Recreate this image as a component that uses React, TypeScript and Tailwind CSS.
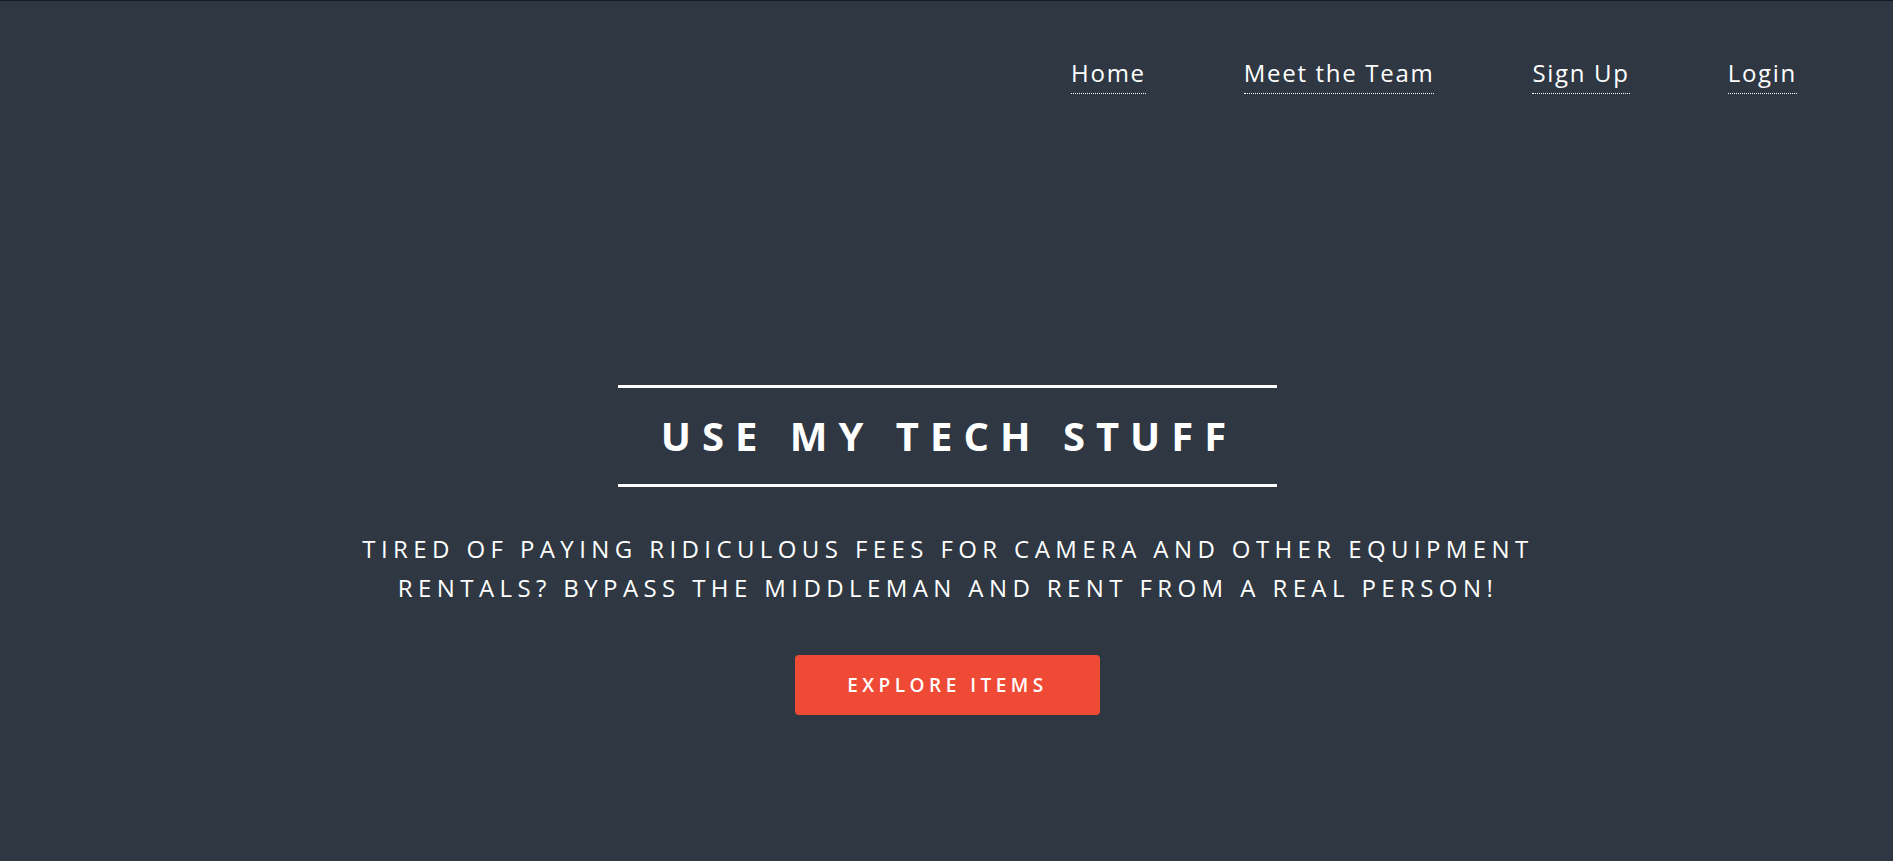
import React from "react";

const links = ["Home", "Meet the Team", "Sign Up", "Login"];

export default function App() {
  return (
    <div
      className="min-h-screen w-full bg-[#2e3742] border-t border-[#16191d] text-white"
      style={{ fontFamily: '"Open Sans", "Liberation Sans", sans-serif' }}
    >
      <header className="flex justify-end gap-[98px] pr-[96px] pt-[54px]">
        {links.map((l) => (
          <a
            key={l}
            href="#"
            className="text-[24px] leading-[36px] tracking-[1.7px] pb-[2px] border-b border-dotted border-white text-white"
          >
            {l}
          </a>
        ))}
      </header>

      <main className="flex flex-col items-center mt-[291px]">
        <h1 className="w-[659px] ml-[2px] border-y-[3px] border-white py-[18px] text-center text-[40px] leading-[60px] font-bold tracking-[11px] pl-[3px]">
          USE MY TECH STUFF
        </h1>
        <p className="mt-[42px] w-[1200px] text-center text-[24px] leading-[39px] tracking-[5.4px] pl-[3px]">
          TIRED OF PAYING RIDICULOUS FEES FOR CAMERA AND OTHER EQUIPMENT RENTALS? BYPASS THE MIDDLEMAN AND RENT FROM A REAL PERSON!
        </p>
        <button className="mt-[48px] ml-[2px] w-[305px] h-[60px] rounded-[4px] bg-[#ef4a35] text-white text-[19px] font-semibold tracking-[4.5px]">
          EXPLORE ITEMS
        </button>
      </main>
    </div>
  );
}
